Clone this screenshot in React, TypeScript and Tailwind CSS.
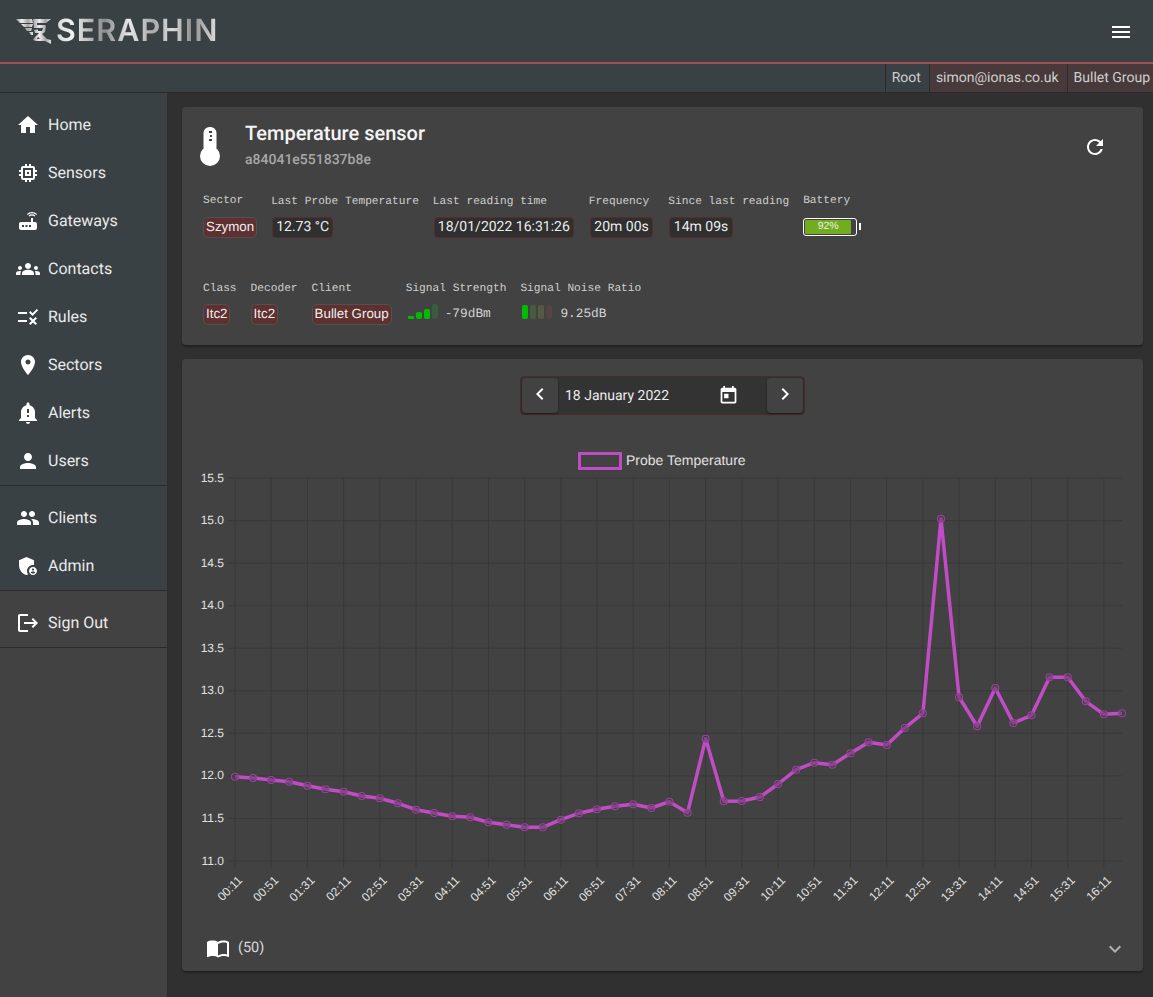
import type { ReactNode } from "react";

const icons = {
  home: "M10 20v-6h4v6h5v-8h3L12 3 2 12h3v8z",
  memory: "M15 9H9v6h6V9zm-2 4h-2v-2h2v2zm8-2V9h-2V7c0-1.1-.9-2-2-2h-2V3h-2v2h-2V3H9v2H7c-1.1 0-2 .9-2 2v2H3v2h2v2H3v2h2v2c0 1.1.9 2 2 2h2v2h2v-2h2v2h2v-2h2c1.1 0 2-.9 2-2v-2h2v-2h-2v-2h2zm-4 6H7V7h10v10z",
  router: "M20.2 5.9l.8-.8C19.6 3.7 17.8 3 16 3s-3.6.7-5 2.1l.8.8C13 4.8 14.5 4.2 16 4.2s3 .6 4.2 1.7zm-.9.8c-.9-.9-2.1-1.4-3.3-1.4s-2.4.5-3.3 1.4l.8.8c.7-.7 1.6-1 2.5-1 .9 0 1.8.3 2.5 1l.8-.8zM19 13h-2V9h-2v4H5c-1.1 0-2 .9-2 2v4c0 1.1.9 2 2 2h14c1.1 0 2-.9 2-2v-4c0-1.1-.9-2-2-2zM8 18H6v-2h2v2zm3.5 0h-2v-2h2v2zm3.5 0h-2v-2h2v2z",
  groups: "M12 12.75c1.63 0 3.07.39 4.24.9 1.08.48 1.76 1.56 1.76 2.73V18H6v-1.61c0-1.18.68-2.26 1.76-2.73 1.17-.52 2.61-.91 4.24-.91zM4 13c1.1 0 2-.9 2-2s-.9-2-2-2-2 .9-2 2 .9 2 2 2zm1.13 1.1c-.37-.06-.74-.1-1.13-.1-.99 0-1.93.21-2.78.58C.48 14.9 0 15.62 0 16.43V18h4.5v-1.61c0-.83.23-1.61.63-2.29zM20 13c1.1 0 2-.9 2-2s-.9-2-2-2-2 .9-2 2 .9 2 2 2zm4 3.43c0-.81-.48-1.53-1.22-1.85-.85-.37-1.79-.58-2.78-.58-.39 0-.76.04-1.13.1.4.68.63 1.46.63 2.29V18H24v-1.57zM12 6c1.66 0 3 1.34 3 3s-1.34 3-3 3-3-1.34-3-3 1.34-3 3-3z",
  rule: "M16.54 11 13 7.46l1.41-1.41 2.12 2.12 4.24-4.24 1.41 1.41L16.54 11zM11 7H2v2h9V7zm10 6.41L19.59 12 17 14.59 14.41 12 13 13.41 15.59 16 13 18.59 14.41 20 17 17.41 19.59 20 21 18.59 18.41 16 21 13.41zM11 15H2v2h9v-2z",
  room: "M12 2C8.13 2 5 5.13 5 9c0 5.25 7 13 7 13s7-7.75 7-13c0-3.87-3.13-7-7-7zm0 9.5c-1.38 0-2.5-1.12-2.5-2.5s1.12-2.5 2.5-2.5 2.5 1.12 2.5 2.5-1.12 2.5-2.5 2.5z",
  alert: "M12 23c1.1 0 1.99-.89 1.99-1.99h-3.98c0 1.1.89 1.99 1.99 1.99zm7-6v-6c0-3.35-2.36-6.15-5.5-6.83V3c0-.83-.67-1.5-1.5-1.5s-1.5.67-1.5 1.5v1.17C7.36 4.85 5 7.65 5 11v6l-2 2v1h18v-1l-2-2zm-6-1h-2v-2h2v2zm0-4h-2V8h2v4z",
  person: "M12 12c2.21 0 4-1.79 4-4s-1.79-4-4-4-4 1.79-4 4 1.79 4 4 4zm0 2c-2.67 0-8 1.34-8 4v2h16v-2c0-2.66-5.33-4-8-4z",
  people: "M16 11c1.66 0 2.99-1.34 2.99-3S17.66 5 16 5c-1.66 0-3 1.34-3 3s1.34 3 3 3zm-8 0c1.66 0 2.99-1.34 2.99-3S9.66 5 8 5C6.34 5 5 6.34 5 8s1.34 3 3 3zm0 2c-2.33 0-7 1.17-7 3.5V19h14v-2.5c0-2.33-4.67-3.5-7-3.5zm8 0c-.29 0-.62.02-.97.05 1.16.84 1.97 1.97 1.97 3.45V19h6v-2.5c0-2.33-4.67-3.5-7-3.5z",
  admin: "M17 11c.34 0 .67.04 1 .09V6.27L10.5 3 3 6.27v4.91c0 4.54 3.2 8.79 7.5 9.82.55-.13 1.08-.32 1.6-.55-.69-.98-1.1-2.17-1.1-3.45 0-3.31 2.69-6 6-6zM17 13c-2.21 0-4 1.79-4 4s1.79 4 4 4 4-1.79 4-4-1.79-4-4-4zm0 1.38c.62 0 1.12.51 1.12 1.12s-.51 1.12-1.12 1.12-1.12-.51-1.12-1.12.5-1.12 1.12-1.12zm0 5.37c-.93 0-1.74-.46-2.24-1.17.05-.72 1.51-1.08 2.24-1.08s2.19.36 2.24 1.08c-.5.71-1.31 1.17-2.24 1.17z",
  logout: "M17 7l-1.41 1.41L18.17 11H8v2h10.17l-2.58 2.58L17 17l5-5zM4 5h8V3H4c-1.1 0-2 .9-2 2v14c0 1.1.9 2 2 2h8v-2H4V5z",
  menu: "M3 18h18v-2H3v2zm0-5h18v-2H3v2zm0-7v2h18V6H3z",
  refresh: "M17.65 6.35C16.2 4.9 14.21 4 12 4c-4.42 0-7.99 3.58-7.99 8s3.57 8 7.99 8c3.73 0 6.84-2.55 7.73-6h-2.08c-.82 2.33-3.04 4-5.65 4-3.31 0-6-2.69-6-6s2.69-6 6-6c1.66 0 3.14.69 4.22 1.78L13 11h7V4l-2.35 2.35z",
  left: "M15.41 7.41 14 6l-6 6 6 6 1.41-1.41L10.83 12z",
  right: "M10 6 8.59 7.41 13.17 12l-4.58 4.59L10 18l6-6z",
  today: "M19 3h-1V1h-2v2H8V1H6v2H5c-1.11 0-1.99.9-1.99 2L3 19c0 1.1.89 2 2 2h14c1.1 0 2-.9 2-2V5c0-1.1-.9-2-2-2zm0 16H5V8h14v11zM7 10h5v5H7z",
  expand: "M16.59 8.59 12 13.17 7.41 8.59 6 10l6 6 6-6z",
  book: "M21 5c-1.11-.35-2.33-.5-3.5-.5-1.95 0-4.05.4-5.5 1.5-1.45-1.1-3.55-1.5-5.5-1.5S2.45 4.9 1 6v14.65c0 .25.25.5.5.5.1 0 .15-.05.25-.05C3.1 20.45 5.05 20 6.5 20c1.95 0 4.05.4 5.5 1.5 1.35-.85 3.8-1.5 5.5-1.5 1.65 0 3.35.3 4.75 1.05.1.05.15.05.25.05.25 0 .5-.25.5-.5V6c-.6-.45-1.25-.75-2-1zm0 13.5c-1.1-.35-2.3-.5-3.5-.5-1.7 0-4.15.65-5.5 1.5V8c1.35-.85 3.8-1.5 5.5-1.5 1.2 0 2.4.15 3.5.5v11.5z",
};

function Icon({ name, className = "w-6 h-6" }: { name: keyof typeof icons; className?: string }) {
  return (
    <svg viewBox="0 0 24 24" fill="currentColor" className={`shrink-0 ${className}`}>
      <path d={icons[name]} />
    </svg>
  );
}

function Logo() {
  return (
    <div className="flex items-center">
      <svg viewBox="0 0 36 27" className="w-[36px] h-[27px]">
        <defs>
          <linearGradient id="wing" x1="0" x2="1" y1="0" y2="0">
            <stop offset="0" stopColor="#a0a0a0" />
            <stop offset="0.35" stopColor="#eeeeee" />
            <stop offset="0.7" stopColor="#a4a4a4" />
            <stop offset="1" stopColor="#e4e4e4" />
          </linearGradient>
        </defs>
        <path fill="url(#wing)" d="M0 1h16l1 4H4zM5 6h12l-1 3H8zM9 10h7l-1 3h-4zM13 14h4v3h-2z" />
        <path fill="url(#wing)" d="M17 1h18l-5 4h-9v2h8l1 1-1 6-3 2 5 5 4 1v4l-6-3H20l-3-1 2-3 1-1 3-3h-4l-1-3 8-1v-1h-8z" />
        <path fill="#394145" d="M22 10h5l-1 3h-4zM21 21h3l-2-2z" />
      </svg>
      <span className="ml-[4px] text-[30.5px] leading-none font-semibold font-['Inter',sans-serif] tracking-[1px] bg-[linear-gradient(90deg,#d8d8d8_0%,#f0f0f0_10%,#8c8c8c_30%,#e8e8e8_45%,#a8a8a8_60%,#dcdcdc_72%,#8e8e8e_84%,#e0e0e0_100%)] bg-clip-text text-transparent">
        SERAPHIN
      </span>
    </div>
  );
}

function NavItem({ icon, label }: { icon: keyof typeof icons; label: string }) {
  return (
    <div className="flex items-center h-12 pl-4 text-[#eaeaea]">
      <Icon name={icon} className="w-6 h-6 text-white" />
      <span className="ml-2 text-[16px]">{label}</span>
    </div>
  );
}

function Field({ label, children, labelClass = "" }: { label: string; children: ReactNode; labelClass?: string }) {
  return (
    <div className="flex flex-col items-start">
      <div className={`h-4 leading-4 text-[11.2px] text-[#cfcfcf] whitespace-nowrap font-['Liberation_Mono',monospace] ${labelClass}`}>
        {label}
      </div>
      <div className="mt-[6px] h-[22px] flex items-center">{children}</div>
    </div>
  );
}

function RedChip({ children }: { children: ReactNode }) {
  return (
    <span className="h-[21px] px-[2px] flex items-center rounded-[5px] border border-[#555050] bg-[#5e3030] text-[13.33px] text-[#efefef] whitespace-nowrap font-['Liberation_Sans',sans-serif]">
      {children}
    </span>
  );
}

function ValueChip({ children, padding = "px-[3px]" }: { children: ReactNode; padding?: string }) {
  return (
    <span className={`mx-px h-[21px] flex items-center rounded-[4px] border border-[#572c2c] bg-[#2f2f2f] text-[14px] text-[#ececec] whitespace-nowrap ${padding}`}>
      {children}
    </span>
  );
}

function SignalStrength() {
  return (
    <div className="flex items-center -mt-[6px]">
      <div className="ml-[2px] flex items-end gap-[2px] h-[15px]">
        <div className="w-[6px] h-[3px] rounded-[1px] bg-[#00bb00]" />
        <div className="w-[6px] h-[7px] rounded-[2px] bg-[#00bb00]" />
        <div className="w-[6px] h-[10px] rounded-[2px] bg-[#00bb00]" />
        <div className="w-[6px] h-[15px] rounded-[2px] bg-[#3c5a3c]" />
      </div>
      <span className="ml-[7px] mt-[6px] text-[12.8px] text-[#d4d4d4] font-['Liberation_Mono',monospace]">-79dBm</span>
    </div>
  );
}

function SignalNoise() {
  return (
    <div className="flex items-center -mt-[6px]">
      <div className="ml-[2px] flex items-end gap-[2px] h-[15px]">
        <div className="w-[6px] h-[14px] rounded-[2px] bg-[#00bb00]" />
        <div className="w-[6px] h-[14px] rounded-[2px] bg-[#475a44]" />
        <div className="w-[6px] h-[14px] rounded-[2px] bg-[#545a44]" />
        <div className="w-[6px] h-[14px] rounded-[2px] bg-[#544444]" />
      </div>
      <span className="ml-[8px] mt-[6px] text-[12.8px] text-[#d4d4d4] font-['Liberation_Mono',monospace]">9.25dB</span>
    </div>
  );
}

function Battery() {
  return (
    <div className="flex items-center -mt-[1px]">
      <div className="w-[54px] h-[18px] rounded-[3px] border border-white p-px pr-[5px]">
        <div className="h-full bg-[#71ad1e] rounded-[1px] flex items-center justify-center text-[10.5px] leading-none text-[#e8f0e0] font-['Liberation_Sans',sans-serif]">
          92%
        </div>
      </div>
      <div className="ml-[2px] w-[1.5px] h-[7px] bg-white" />
    </div>
  );
}

const ys = [
  776.7, 778, 780, 781.7, 785.7, 789.3, 791.7, 796, 798.3, 803.3, 809.7, 813, 816.3, 817.3, 822.3, 824.7, 827.3, 827.3,
  819.7, 813.3, 809.3, 806.3, 804.3, 808, 801.7, 812.7, 738.7, 801.3, 801, 797, 784, 769.7, 762.7, 764.7, 753.3, 742.3,
  745, 728, 713.3, 518.7, 697.3, 726.3, 688, 723, 715.3, 677.3, 677.3, 701.3, 714.3, 713.3,
];

const ticks = [
  "00:11", "00:51", "01:31", "02:11", "02:51", "03:31", "04:11", "04:51", "05:31", "06:11", "06:51", "07:31", "08:11",
  "08:51", "09:31", "10:11", "10:51", "11:31", "12:11", "12:51", "13:31", "14:11", "14:51", "15:31", "16:11",
];

const yLabels = ["15.5", "15.0", "14.5", "14.0", "13.5", "13.0", "12.5", "12.0", "11.5", "11.0"];
const xOf = (i: number) => 235 + (887 / 49) * i;
const yOf = (i: number) => 478 + (383 / 9) * i;

function Chart() {
  const points = ys.map((y, i) => `${xOf(i).toFixed(1)},${y}`).join(" ");
  return (
    <svg viewBox="182 415 961 510" className="block w-[961px] h-[510px] font-['Liberation_Sans',sans-serif]">
      <rect x="579.5" y="453.5" width="41" height="15" fill="none" stroke="#c04cc4" strokeWidth="3" />
      <text x="626" y="465" fontSize="14" fill="#e0e0e0">Probe Temperature</text>
      {yLabels.map((label, i) => (
        <g key={label}>
          <line x1="228" x2="1122" y1={yOf(i)} y2={yOf(i)} stroke="#393939" />
          <text x="224" y={yOf(i) + 3.5} fontSize="12" textAnchor="end" fill="#e0e0e0">{label}</text>
        </g>
      ))}
      {ticks.map((label, i) => {
        const x = xOf(i * 2);
        return (
          <g key={label}>
            <line x1={x} x2={x} y1="478" y2="868" stroke="#393939" />
            <text
              x={x + 8}
              y={881}
              fontSize="12"
              textAnchor="end"
              fill="#e0e0e0"
              transform={`rotate(-45 ${x + 8} 881)`}
            >
              {label}
            </text>
          </g>
        );
      })}
      <polyline points={points} fill="none" stroke="#c24cc6" strokeWidth="3.5" strokeLinejoin="round" />
      {ys.map((y, i) => (
        <circle key={i} cx={xOf(i)} cy={y} r="3.5" fill="#4a3a4a" fillOpacity="0.45" stroke="#9a42a0" strokeWidth="1.1" />
      ))}
    </svg>
  );
}

export default function App() {
  return (
    <div className="min-h-screen flex flex-col bg-[#303030] font-['Roboto',sans-serif] [text-rendering:geometricPrecision]">
      <header className="h-[93px] shrink-0 bg-[#394145] flex flex-col border-b border-[#2b2b2b]">
        <div className="h-[62px] flex items-center justify-between pl-4 pr-5">
          <Logo />
          <Icon name="menu" className="w-6 h-6 text-white mt-[2px]" />
        </div>
        <div className="h-[2px] bg-[#9c5050]" />
        <div className="flex-1 flex justify-end text-[14px] text-[#cfcfcf]">
          <div className="pl-[6px] pr-[8px] flex items-center border-l border-[#2b2b2b]">Root</div>
          <div className="pl-[6px] pr-[8px] flex items-center border-l border-[#2b2b2b] bg-[#483a3a]">simon@ionas.co.uk</div>
          <div className="pl-[6px] pr-[3px] flex items-center border-l border-[#2b2b2b] bg-[#483a3a]">Bullet Group</div>
        </div>
      </header>
      <div className="flex-1 flex">
        <aside className="w-[168px] shrink-0 bg-[#424242] border-r border-[#2e2e2e] flex flex-col">
          <div className="bg-[#394145]">
            <nav className="pt-2 border-b border-[#2b2b2b]">
              <NavItem icon="home" label="Home" />
              <NavItem icon="memory" label="Sensors" />
              <NavItem icon="router" label="Gateways" />
              <NavItem icon="groups" label="Contacts" />
              <NavItem icon="rule" label="Rules" />
              <NavItem icon="room" label="Sectors" />
              <NavItem icon="alert" label="Alerts" />
              <NavItem icon="person" label="Users" />
            </nav>
            <nav className="pt-2 border-b border-[#2b2b2b]">
              <NavItem icon="people" label="Clients" />
              <NavItem icon="admin" label="Admin" />
            </nav>
          </div>
          <nav className="pt-2 border-b border-[#2b2b2b]">
            <NavItem icon="logout" label="Sign Out" />
          </nav>
        </aside>
        <main className="flex-1 pt-[14px] pl-[14px] pr-[10px] flex flex-col gap-[14px]">
          <section className="h-[238px] rounded bg-[#424242] shadow-[0_2px_2px_rgba(0,0,0,0.3)] px-[21px] pt-[11px]">
            <div className="flex items-start">
              <svg viewBox="0 0 20 40" className="w-[20px] h-[40px] mt-[9px] -ml-[3px] text-white shrink-0">
                <rect x="3.5" y="0" width="13" height="26" rx="6" fill="currentColor" />
                <circle cx="10" cy="29" r="10" fill="currentColor" />
                <path fill="#424242" d="M9 4h3v2H9zM10 8h2v2h-2zM9 12h3v2H9z" />
              </svg>
              <div className="ml-[25px] flex-1">
                <div className="h-[31px] leading-[31px] text-[20px] font-medium text-[#f4f4f4]">Temperature sensor</div>
                <div className="h-5 pt-px leading-5 text-[14px] font-medium text-[#a8a8a8]">a84041e551837b8e</div>
              </div>
              <Icon name="refresh" className="w-6 h-6 text-white mt-[17px] mr-[15px]" />
            </div>
            <div className="mt-[25px] flex gap-[14px]">
              <Field label="Sector" labelClass="-mt-px mb-px"><RedChip>Szymon</RedChip></Field>
              <Field label="Last Probe Temperature"><ValueChip>12.73 °C</ValueChip></Field>
              <Field label="Last reading time"><ValueChip>18/01/2022 16:31:26</ValueChip></Field>
              <Field label="Frequency"><ValueChip padding="px-[3.5px]">20m 00s</ValueChip></Field>
              <Field label="Since last reading"><ValueChip padding="px-[3.5px]">14m 09s</ValueChip></Field>
              <Field label="Battery" labelClass="-mt-px mb-px"><Battery /></Field>
            </div>
            <div className="mt-[43px] flex gap-[14px]">
              <Field label="Class"><RedChip>Itc2</RedChip></Field>
              <Field label="Decoder"><RedChip>Itc2</RedChip></Field>
              <Field label="Client"><RedChip>Bullet Group</RedChip></Field>
              <Field label="Signal Strength"><SignalStrength /></Field>
              <Field label="Signal Noise Ratio"><SignalNoise /></Field>
            </div>
          </section>
          <section className="h-[612px] rounded bg-[#424242] shadow-[0_2px_2px_rgba(0,0,0,0.3)] pt-[17px] flex flex-col">
            <div className="self-center w-[285px] h-[39px] p-px rounded border border-[#4c2a2a] bg-[#333333] flex items-center text-[14px] text-[#ececec]">
              <div className="w-9 h-[35px] rounded bg-[#424242] shadow-[0_1px_2px_rgba(0,0,0,0.5)] flex items-center justify-center">
                <Icon name="left" className="w-6 h-6 text-white -mt-[3px]" />
              </div>
              <span className="ml-[7px] mt-px flex-1">18 January 2022</span>
              <Icon name="today" className="w-[21px] h-[21px] text-white mr-[28px]" />
              <div className="w-9 h-[35px] rounded bg-[#424242] shadow-[0_1px_2px_rgba(0,0,0,0.5)] flex items-center justify-center">
                <Icon name="right" className="w-6 h-6 text-white -mt-[3px]" />
              </div>
            </div>
            <Chart />
            <div className="flex-1 flex items-center justify-between pl-6 pr-4 pb-[1px] text-[14.5px] text-[#d8d8d8]">
              <div className="flex items-center gap-2">
                <Icon name="book" className="w-6 h-6 text-white" />
                <span className="mt-px">(50)</span>
              </div>
              <Icon name="expand" className="w-6 h-6 text-[#b0b0b0] mt-[3px]" />
            </div>
          </section>
        </main>
      </div>
    </div>
  );
}
